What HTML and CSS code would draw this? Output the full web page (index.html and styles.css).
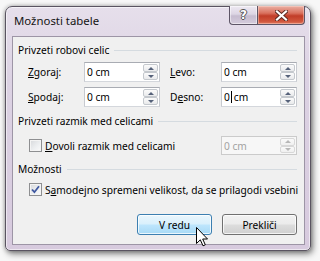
FILE: index.html
```html
<!DOCTYPE html>
<html lang="sl">
<head>
<meta charset="utf-8">
<title>Možnosti tabele</title>
<link rel="stylesheet" href="styles.css">
</head>
<body>
<div class="screen">
  <div class="window">
    <div class="titlebar">
      <div class="title">Možnosti tabele</div>
      <div class="caption">
        <div class="cap-btn cap-help">?</div>
        <div class="cap-btn cap-close">
          <svg width="13" height="11" viewBox="0 0 13 11">
            <path d="M2 1.5 L11 9.5 M11 1.5 L2 9.5" stroke="#5a2a22" stroke-width="4" stroke-linecap="square" fill="none"/>
            <path d="M2 1.5 L11 9.5 M11 1.5 L2 9.5" stroke="#ffffff" stroke-width="2.2" stroke-linecap="square" fill="none"/>
          </svg>
        </div>
      </div>
    </div>
    <div class="client">
      <div class="group-head"><span>Privzeti robovi celic</span><i class="rule"></i></div>
      <div class="margins">
        <label class="lbl"><u>Z</u>goraj:</label>
        <div class="spin"><span class="val">0 cm</span><div class="spin-btns"><b class="sb up"></b><b class="sb down"></b></div></div>
        <label class="lbl lbl-right"><u>L</u>evo:</label>
        <div class="spin"><span class="val">0 cm</span><div class="spin-btns"><b class="sb up"></b><b class="sb down"></b></div></div>
        <label class="lbl"><u>S</u>podaj:</label>
        <div class="spin"><span class="val">0 cm</span><div class="spin-btns"><b class="sb up"></b><b class="sb down"></b></div></div>
        <label class="lbl lbl-right">D<u>e</u>sno:</label>
        <div class="spin"><span class="val">0<span class="caret"></span>cm</span><div class="spin-btns"><b class="sb up"></b><b class="sb down"></b></div></div>
      </div>

      <div class="group-head gap-top"><span>Privzeti razmik med celicami</span><i class="rule"></i></div>
      <div class="check-row spaced">
        <span class="checkbox"></span>
        <span class="check-label"><u>D</u>ovoli razmik med celicami</span>
        <div class="spin disabled"><span class="val">0 cm</span><div class="spin-btns"><b class="sb up"></b><b class="sb down"></b></div></div>
      </div>

      <div class="group-head gap-top"><span>Možnosti</span><i class="rule"></i></div>
      <div class="check-row tight">
        <span class="checkbox checked">
          <svg width="9" height="9" viewBox="0 0 9 9"><path d="M1 4.5 L3.4 7.2 L8 1.2" stroke="#3f58a0" stroke-width="1.8" fill="none"/></svg>
        </span>
        <span class="check-label">S<u>a</u>modejno spremeni velikost, da se prilagodi vsebini</span>
      </div>

      <div class="buttons">
        <div class="btn btn-default">V redu</div>
        <div class="btn">Prekliči</div>
      </div>
    </div>
  </div>
  <svg class="cursor" width="13" height="20" viewBox="0 0 13 20">
    <path d="M0.5 0.5 L0.5 16.5 L4.3 12.8 L7 18.8 L9.3 17.8 L6.7 12 L11.5 12 Z" fill="#ffffff" stroke="#000000" stroke-width="1" stroke-linejoin="miter"/>
  </svg>
</div>
</body>
</html>
```

FILE: styles.css
```css
* { box-sizing: border-box; }
html, body { margin: 0; padding: 0; }
body {
  background: #f7f7f7;
  font-family: "Noto Sans", "Open Sans", "DejaVu Sans", sans-serif;
  font-size: 10.2px;
  color: #000;
}
u { text-decoration: underline; text-underline-offset: 1px; }

.screen {
  position: relative;
  width: 319px;
  height: 261px;
  overflow: hidden;
  padding: 6px 0 0 5px;
  background: #f7f7f7;
}

.window {
  width: 306px;
  height: 245px;
  border: 1px solid #5a5461;
  border-radius: 7px 7px 5px 5px;
  background: linear-gradient(180deg, #e6dfeb 0%, #dcd2e3 30%, #d7cade 100%);
  box-shadow: inset 0 0 0 1px rgba(255,255,255,0.55), 0 0 4px rgba(0,0,0,0.3), 2px 3px 6px rgba(0,0,0,0.45);
  display: flex;
  flex-direction: column;
}

.titlebar {
  height: 29px;
  display: flex;
  align-items: flex-start;
}
.title {
  font-size: 11.4px;
  line-height: 16px;
  padding: 6px 0 0 8px;
  color: #141414;
}
.caption {
  margin-left: auto;
  margin-right: 5px;
  margin-top: -1px;
  display: flex;
}
.cap-btn {
  height: 19px;
  border: 1px solid #5d5566;
  border-top: none;
  display: flex;
  align-items: center;
  justify-content: center;
}
.cap-help {
  width: 28px;
  border-right: none;
  border-bottom-left-radius: 4px;
  background: linear-gradient(180deg, #eee9f2 0%, #ddd6e4 45%, #c6bccf 55%, #d5ccdc 100%);
  box-shadow: inset 0 0 0 1px rgba(255,255,255,0.5);
  color: #fff;
  font-family: "DejaVu Sans", sans-serif;
  font-weight: bold;
  font-size: 12px;
  line-height: 12px;
  text-shadow: 1px 0 0 #555, -1px 0 0 #555, 0 1px 0 #555, 0 -1px 0 #555;
}
.cap-close {
  width: 48px;
  border-bottom-right-radius: 4px;
  background: linear-gradient(180deg, #eab0a4 0%, #d9705d 40%, #c13d28 55%, #d0553c 85%, #e07a5e 100%);
  box-shadow: inset 0 0 0 1px rgba(255,220,210,0.45);
}

.client {
  flex: 1;
  margin: 0 5px 5px 6px;
  border: 1px solid #9d95a6;
  background: #f0f0f0;
  display: flex;
  flex-direction: column;
  padding: 6px 7px 9px 5px;
}

.group-head {
  height: 15px;
  line-height: 15px;
  display: flex;
  align-items: center;
  gap: 5px;
}
.group-head.gap-top { margin-top: 7px; }
.rule {
  flex: 1;
  height: 1px;
  background: #d5dbe0;
}

.margins {
  display: grid;
  grid-template-columns: 56px 76px 61px 76px;
  grid-auto-rows: 20px;
  row-gap: 5px;
  margin-top: 4px;
  padding-left: 10px;
}
.lbl {
  display: flex;
  align-items: center;
}
.lbl-right { padding-left: 10px; }

.spin {
  width: 76px;
  height: 20px;
  border: 1px solid #a9acb3;
  border-left-color: #c7cad0;
  border-right-color: #c7cad0;
  border-bottom-color: #d4d7dc;
  background: #fff;
  display: flex;
  align-items: center;
  padding-left: 2px;
}
.val {
  flex: 1;
  display: flex;
  align-items: center;
  white-space: pre;
}
.caret {
  display: inline-block;
  width: 1px;
  height: 12px;
  background: #000;
  margin: 0 2px 0 1px;
}
.spin-btns {
  width: 16px;
  height: 100%;
  padding: 1px 1px 1px 0;
  display: flex;
  flex-direction: column;
}
.sb {
  flex: 1;
  border: 1px solid #c4c8cd;
  border-radius: 2px;
  background: linear-gradient(180deg, #fbfbfb 0%, #e9eaec 100%);
  display: flex;
  align-items: center;
  justify-content: center;
}
.sb::after {
  content: "";
  width: 0;
  height: 0;
  border-left: 3px solid transparent;
  border-right: 3px solid transparent;
}
.sb.up::after { border-bottom: 3px solid #56627a; }
.sb.down::after { border-top: 3px solid #56627a; }

.spin.disabled {
  height: 19px;
  border-color: #cbcbcb;
  background: #f7f7f7;
  color: #a3a3a3;
  margin-left: auto;
}
.spin.disabled .sb { border-color: #d8d8d8; background: linear-gradient(180deg, #fafafa, #f0f0f0); }
.spin.disabled .sb.up::after { border-bottom-color: #b7b7b7; }
.spin.disabled .sb.down::after { border-top-color: #b7b7b7; }

.check-row {
  height: 19px;
  display: flex;
  align-items: center;
  padding-left: 11px;
}
.check-row.spaced { margin-top: 7px; }
.check-row.tight { margin-top: 3px; }
.checkbox {
  width: 13px;
  height: 13px;
  border: 1px solid #8e8f91;
  background: linear-gradient(135deg, #d6d8db 0%, #eef0f2 60%, #fafafa 100%);
  box-shadow: inset 0 0 0 1px #f4f4f4;
  display: flex;
  align-items: center;
  justify-content: center;
  flex: none;
}
.check-label { margin-left: 3px; white-space: nowrap; }

.buttons {
  margin-top: auto;
  display: flex;
  justify-content: flex-end;
  gap: 10px;
}
.btn {
  width: 75px;
  height: 21px;
  border: 1px solid #707070;
  border-radius: 3px;
  background: linear-gradient(180deg, #f2f2f2 0%, #ebebeb 48%, #dddddd 52%, #cfcfcf 100%);
  box-shadow: inset 0 0 0 1px rgba(255,255,255,0.75);
  display: flex;
  align-items: center;
  justify-content: center;
}
.btn-default {
  border-color: #3c7fb1;
  background: linear-gradient(180deg, #eaf6fd 0%, #d9f0fc 48%, #bee6fd 52%, #a7d9f5 100%);
}

.cursor {
  position: absolute;
  left: 196px;
  top: 227px;
}
```
